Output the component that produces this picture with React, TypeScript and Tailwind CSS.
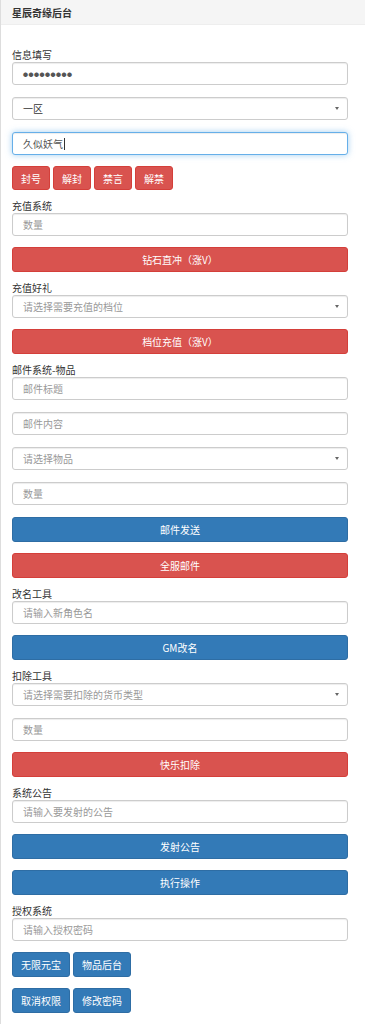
import React from "react";

const font = { fontFamily: '"Noto Sans CJK SC", "Noto Sans", sans-serif' };

function Label({ text }: { text: string }) {
  return (
    <div className="mt-[10px] mb-[1px] h-[12px] text-[10px] leading-[12px] text-[#333]">
      {text}
    </div>
  );
}

function Field({ placeholder, className = "" }: { placeholder: string; className?: string }) {
  return (
    <input
      readOnly
      placeholder={placeholder}
      className={`block h-[23px] w-full rounded-[3px] border border-[#ccc] bg-white px-[10px] text-[10px] text-[#555] shadow-[inset_0_1px_1px_rgba(0,0,0,0.075)] outline-none placeholder:text-[#999] ${className}`}
    />
  );
}

function Select({ text, muted = true, className = "" }: { text: string; muted?: boolean; className?: string }) {
  return (
    <div
      className={`flex h-[23px] w-full items-center justify-between rounded-[3px] border border-[#ccc] bg-white pl-[10px] pr-[8px] text-[10px] shadow-[inset_0_1px_1px_rgba(0,0,0,0.075)] ${
        muted ? "text-[#999]" : "text-[#333]"
      } ${className}`}
    >
      <span>{text}</span>
      <span className="h-0 w-0 border-x-[2px] border-t-[3px] border-x-transparent border-t-[#666]" />
    </div>
  );
}

function Wide({ text, color, className = "" }: { text: string; color: "red" | "blue"; className?: string }) {
  const c =
    color === "red"
      ? "bg-[#d9534f] border-[#d43f3a]"
      : "bg-[#337ab7] border-[#2e6da4]";
  return (
    <button
      className={`flex h-[25px] w-full items-center justify-center rounded-[3px] border text-[10px] text-white ${c} ${className}`}
    >
      {text}
    </button>
  );
}

function Small({ text, color }: { text: string; color: "red" | "blue" }) {
  const c =
    color === "red"
      ? "bg-[#d9534f] border-[#d43f3a]"
      : "bg-[#337ab7] border-[#2e6da4]";
  return (
    <button
      className={`flex h-full items-center justify-center rounded-[3px] border px-[8px] text-[10px] text-white ${c}`}
    >
      {text}
    </button>
  );
}

export default function App() {
  return (
    <div className="min-h-[1024px] w-[365px] border-l border-[#ddd] bg-white" style={font}>
      <div className="flex h-[25px] items-center border-b border-[#eee] bg-[#f5f5f5] px-[11px] text-[10px] font-bold text-[#333]">
        星辰奇缘后台
      </div>
      <div className="ml-[11px] w-[336px] pt-[14px]">
        <Label text="信息填写" />
        <div className="flex h-[23px] w-full items-center rounded-[3px] border border-[#ccc] bg-white px-[10px] text-[5px] tracking-[0.5px] text-[#555] shadow-[inset_0_1px_1px_rgba(0,0,0,0.075)]">
          ●●●●●●●●●
        </div>
        <Select text="一区" muted={false} className="mt-[12px]" />
        <div className="mt-[12px] flex h-[23px] w-full items-center rounded-[3px] border border-[#66afe9] bg-white px-[10px] text-[10px] text-[#555] shadow-[inset_0_1px_1px_rgba(0,0,0,0.075),0_0_6px_rgba(102,175,233,0.6)]">
          久似妖气<span className="ml-[1px] h-[12px] w-px bg-[#333]" />
        </div>
        <div className="mt-[11px] flex h-[24px] gap-[3px]">
          <Small text="封号" color="red" />
          <Small text="解封" color="red" />
          <Small text="禁言" color="red" />
          <Small text="解禁" color="red" />
        </div>

        <Label text="充值系统" />
        <Field placeholder="数量" />
        <Wide text="钻石直冲（涨V）" color="red" className="mt-[11px]" />

        <Label text="充值好礼" />
        <Select text="请选择需要充值的档位" />
        <Wide text="档位充值（涨V）" color="red" className="mt-[11px]" />

        <Label text="邮件系统-物品" />
        <Field placeholder="邮件标题" />
        <Field placeholder="邮件内容" className="mt-[12px]" />
        <Select text="请选择物品" className="mt-[12px]" />
        <Field placeholder="数量" className="mt-[12px]" />
        <Wide text="邮件发送" color="blue" className="mt-[12px]" />
        <Wide text="全服邮件" color="red" className="mt-[11px]" />

        <Label text="改名工具" />
        <Field placeholder="请输入新角色名" />
        <Wide text="GM改名" color="blue" className="mt-[11px]" />

        <Label text="扣除工具" />
        <Select text="请选择需要扣除的货币类型" />
        <Field placeholder="数量" className="mt-[12px]" />
        <Wide text="快乐扣除" color="red" className="mt-[11px]" />

        <Label text="系统公告" />
        <Field placeholder="请输入要发射的公告" />
        <Wide text="发射公告" color="blue" className="mt-[11px]" />
        <Wide text="执行操作" color="blue" className="mt-[11px]" />

        <Label text="授权系统" />
        <Field placeholder="请输入授权密码" />
        <div className="mt-[11px] flex h-[25px] gap-[3px]">
          <Small text="无限元宝" color="blue" />
          <Small text="物品后台" color="blue" />
        </div>
        <div className="mt-[11px] flex h-[25px] gap-[3px]">
          <Small text="取消权限" color="blue" />
          <Small text="修改密码" color="blue" />
        </div>
      </div>
    </div>
  );
}
